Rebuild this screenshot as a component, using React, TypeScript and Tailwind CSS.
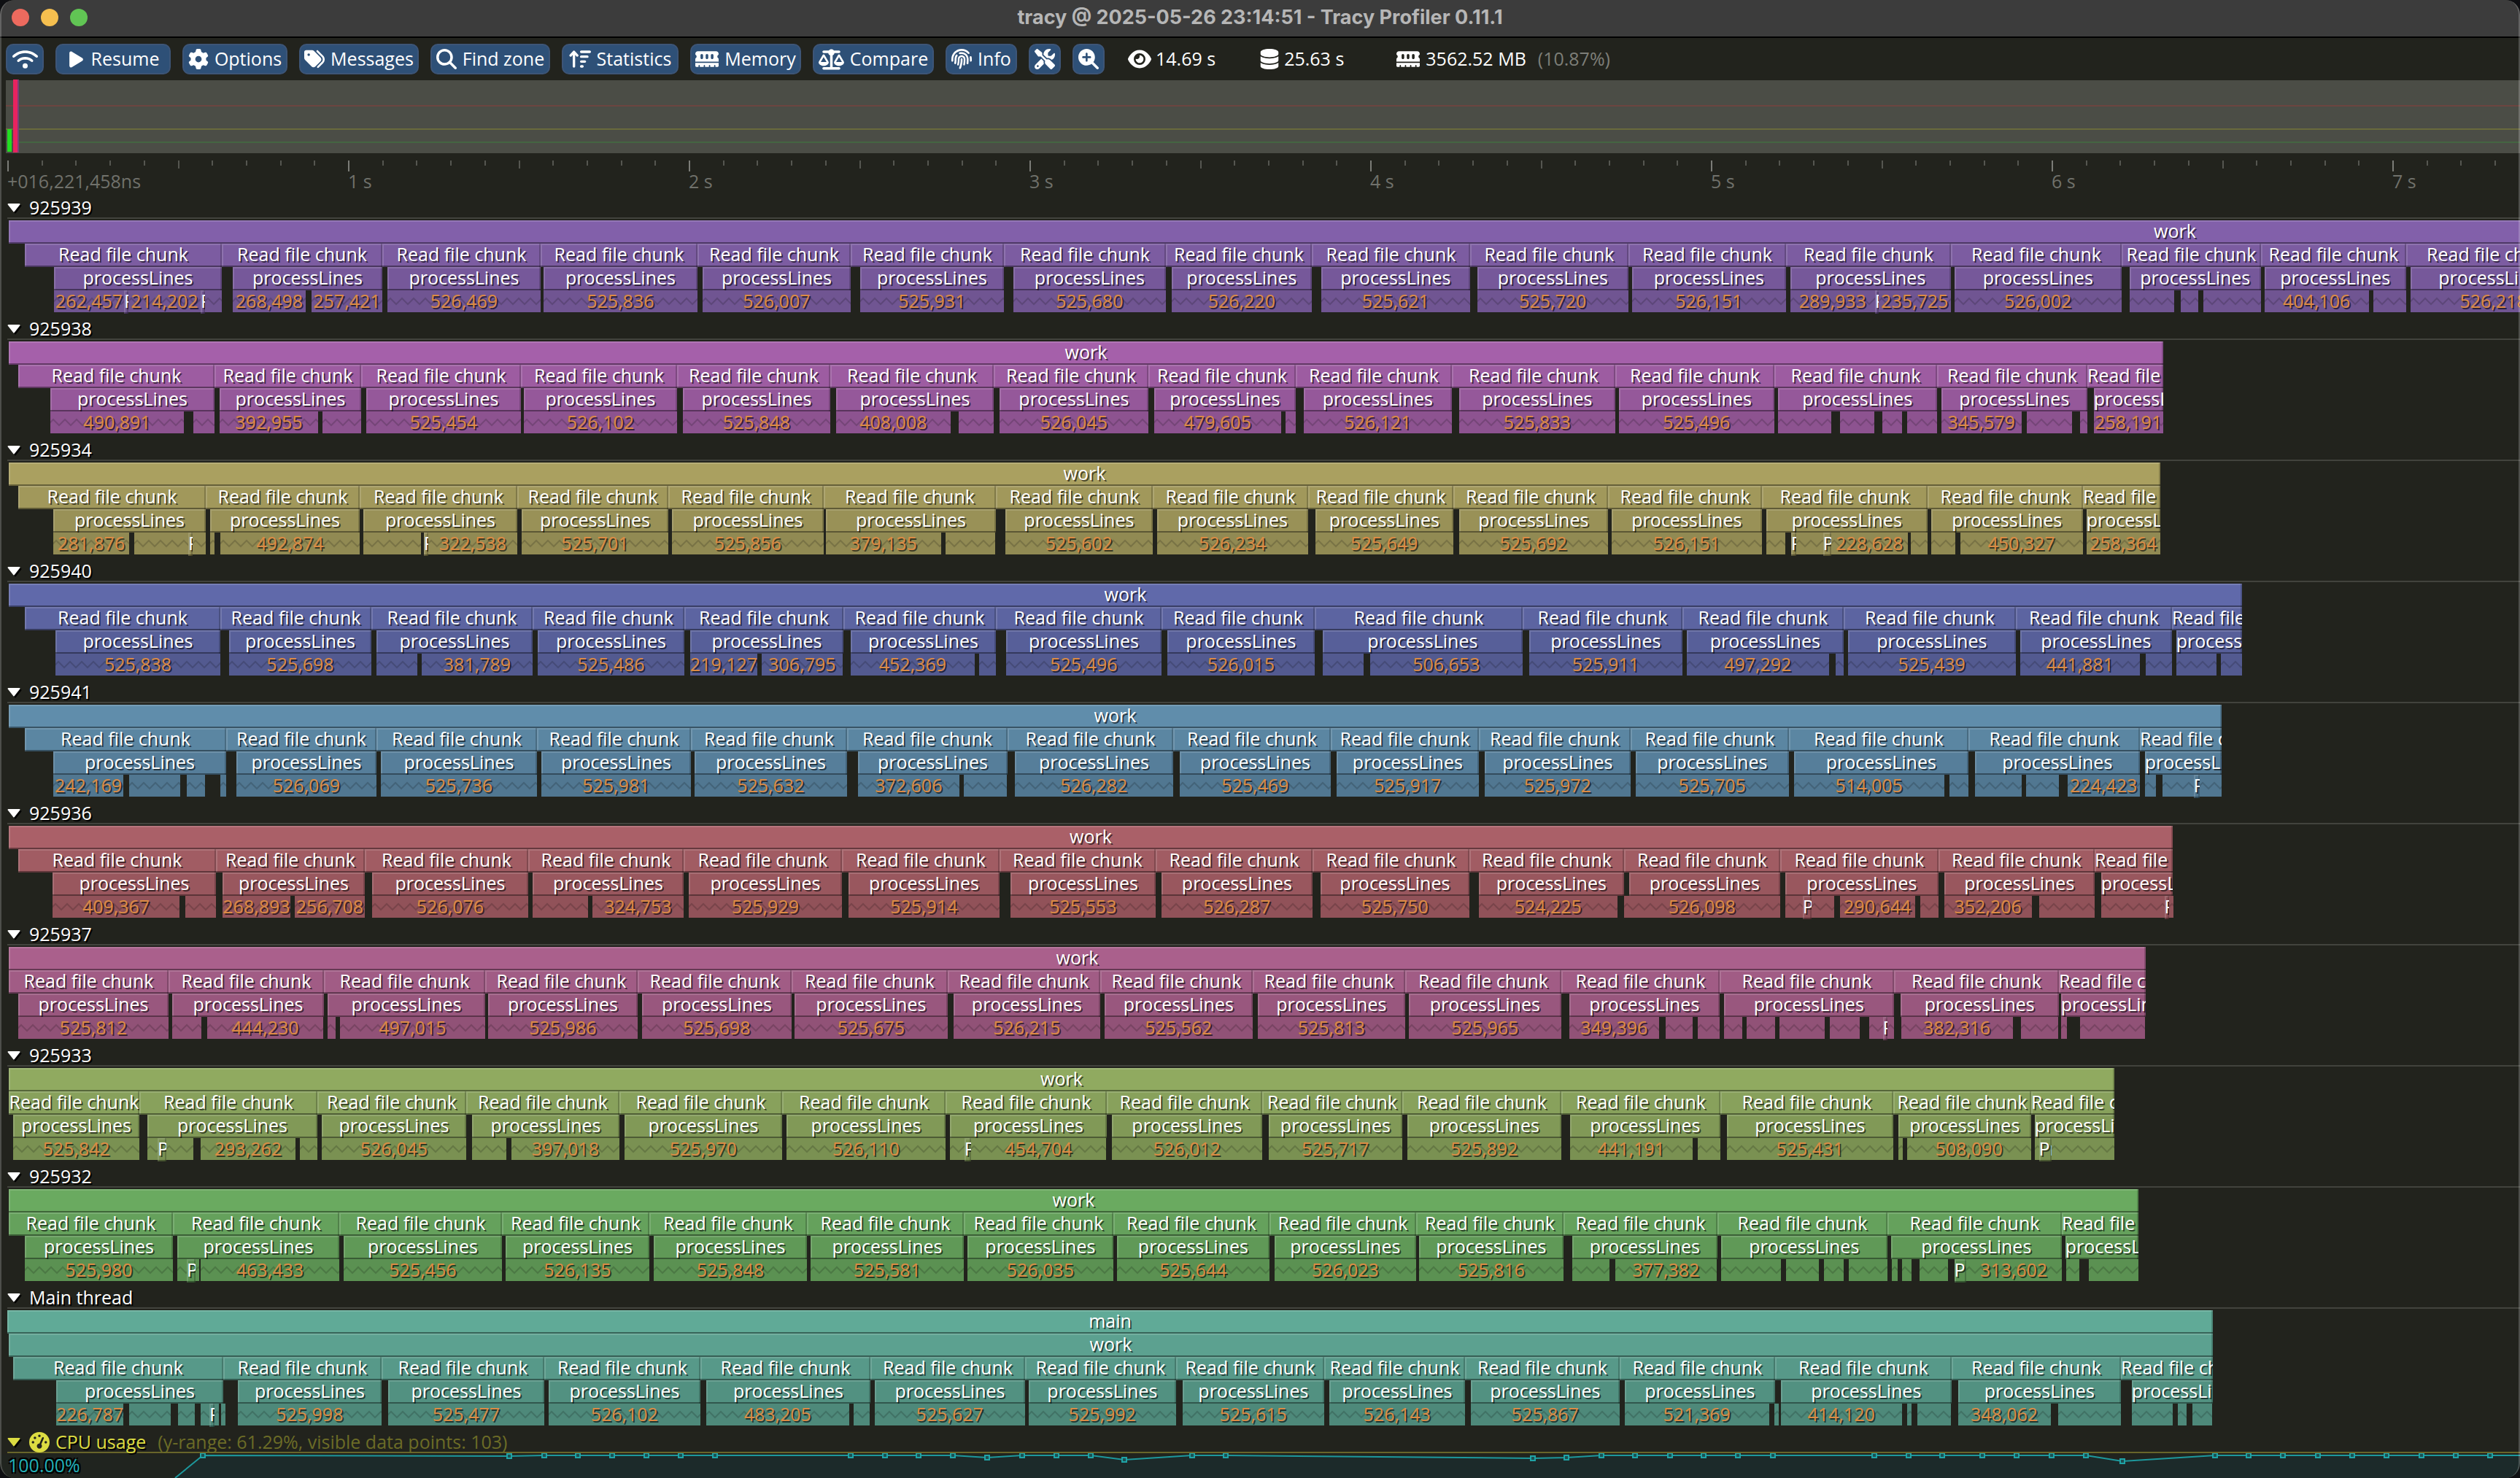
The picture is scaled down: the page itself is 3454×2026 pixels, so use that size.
import type { ReactNode } from "react";
import {
  FaArrowUpWideShort,
  FaDatabase,
  FaEye,
  FaFingerprint,
  FaGaugeHigh,
  FaGear,
  FaMagnifyingGlass,
  FaMagnifyingGlassPlus,
  FaMemory,
  FaPlay,
  FaScaleBalanced,
  FaScrewdriverWrench,
  FaTags,
  FaWifi,
} from "react-icons/fa6";

/** Width of the visible time range, in timeline units. */
const VIEW = 3454;
const SECOND = 467;
const pct = (units: number) => `${(units / VIEW) * 100}%`;

/** [start, end, label]; label "P" marks a tiny processLines zone. */
type Leaf = [number, number, string?];
/** [read start, processLines start, merged child zones]. */
type Chunk = [number, number, string | Leaf[]];

type Thread = {
  name: string;
  end: number;
  colors: string[];
  chunks: Chunk[];
  roots: [string, number][];
};

const threads: Thread[] = [
  {
    name: "925939",
    end: 5950,
    roots: [["work", 12]],
    colors: ["bg-[#8260aa]", "bg-[#7c5ca1]", "bg-[#76589a]", "bg-[#705592]"],
    chunks: [
      [34, 74, [[74, 170, "262,457"], [170, 176, "P"], [176, 275, "214,202"], [275, 281, "P"], [281, 304]]],
      [304, 319, [[319, 419, "268,498"], [427, 524, "257,421"]]],
      [524, 531, "526,469"],
      [741, 745, "525,836"],
      [956, 963, "526,007"],
      [1166, 1179, "525,931"],
      [1376, 1389, "525,680"],
      [1598, 1606, "526,220"],
      [1798, 1811, "525,621"],
      [2015, 2025, "525,720"],
      [2232, 2237, "526,151"],
      [2448, 2454, [[2454, 2570, "289,933"], [2570, 2575, "P"], [2575, 2674, "235,725"]]],
      [2674, 2679, "526,002"],
      [2908, 2919, [[2919, 2980], [2989, 3013], [3020, 3099]]],
      [3099, 3104, [[3104, 3247, "404,106"], [3253, 3298]]],
      [3298, 3304, "526,218"],
      [3532, 3540, "525,702"],
    ],
  },
  {
    name: "925938",
    end: 2965,
    roots: [["work", 12]],
    colors: ["bg-[#a560aa]", "bg-[#9d5ca1]", "bg-[#95589a]", "bg-[#8d5390]"],
    chunks: [
      [25, 69, [[69, 252, "490,891"], [265, 294]]],
      [294, 301, [[301, 436, "392,955"], [442, 495]]],
      [495, 502, "525,454"],
      [714, 718, "526,102"],
      [928, 936, "525,848"],
      [1138, 1146, [[1146, 1303, "408,008"], [1314, 1362]]],
      [1362, 1370, "526,045"],
      [1574, 1582, [[1582, 1756, "479,605"], [1762, 1776]]],
      [1776, 1787, "526,121"],
      [1990, 2000, "525,833"],
      [2214, 2219, "525,496"],
      [2432, 2437, [[2437, 2510], [2522, 2569], [2580, 2607], [2614, 2655]]],
      [2655, 2661, [[2661, 2771, "345,579"], [2778, 2840], [2851, 2861]]],
      [2861, 2870, "258,191"],
    ],
  },
  {
    name: "925934",
    end: 2961,
    roots: [["work", 12]],
    colors: ["bg-[#aaa060]", "bg-[#a1985b]", "bg-[#999157]", "bg-[#918a53]"],
    chunks: [
      [25, 73, [[73, 177, "281,876"], [184, 258], [258, 264, "P"], [264, 282]]],
      [282, 288, [[288, 294], [302, 493, "492,874"]]],
      [493, 498, [[498, 577], [581, 587, "P"], [587, 709, "322,538"]]],
      [709, 715, "525,701"],
      [916, 921, "525,856"],
      [1129, 1132, [[1132, 1290, "379,135"], [1296, 1364]]],
      [1365, 1378, "525,602"],
      [1580, 1586, "526,234"],
      [1793, 1803, "525,649"],
      [1992, 2000, "525,692"],
      [2204, 2209, "526,151"],
      [2415, 2421, [[2421, 2447], [2455, 2462, "P"], [2462, 2499], [2499, 2510, "P"], [2510, 2615, "228,628"], [2619, 2642]]],
      [2642, 2647, [[2647, 2680], [2687, 2855, "450,327"]]],
      [2855, 2860, "258,364"],
    ],
  },
  {
    name: "925940",
    end: 3073,
    roots: [["work", 12]],
    colors: ["bg-[#6069aa]", "bg-[#5c64a1]", "bg-[#575f99]", "bg-[#535a90]"],
    chunks: [
      [34, 76, "525,838"],
      [302, 314, "525,698"],
      [509, 516, [[516, 572], [578, 730, "381,789"]]],
      [730, 737, "525,486"],
      [938, 946, [[946, 1038, "219,127"], [1044, 1155, "306,795"]]],
      [1156, 1166, [[1166, 1336, "452,369"], [1342, 1365]]],
      [1365, 1379, "525,496"],
      [1592, 1600, "526,015"],
      [1802, 1813, [[1813, 1869], [1878, 2087, "506,653"]]],
      [2087, 2096, "525,911"],
      [2306, 2312, [[2312, 2507, "497,292"], [2516, 2527]]],
      [2527, 2533, "525,439"],
      [2763, 2769, [[2769, 2933, "441,881"], [2941, 2977]]],
      [2977, 2983, [[2983, 3038], [3044, 3073]]],
    ],
  },
  {
    name: "925941",
    end: 3045,
    roots: [["work", 12]],
    colors: ["bg-[#608dab]", "bg-[#5b86a2]", "bg-[#567e9a]", "bg-[#517791]"],
    chunks: [
      [34, 73, [[73, 169, "242,169"], [177, 247], [256, 281], [302, 310]]],
      [310, 324, "526,069"],
      [516, 522, "525,736"],
      [736, 742, "525,981"],
      [947, 952, "525,632"],
      [1161, 1176, [[1176, 1315, "372,606"], [1321, 1380]]],
      [1381, 1391, "526,282"],
      [1608, 1617, "525,469"],
      [1824, 1832, "525,917"],
      [2027, 2035, "525,972"],
      [2235, 2242, "525,705"],
      [2452, 2459, [[2459, 2665, "514,005"], [2672, 2698]]],
      [2698, 2707, [[2707, 2771], [2777, 2822], [2834, 2933, "224,423"]]],
      [2933, 2940, [[2940, 2955], [2964, 3007], [3007, 3015, "P"], [3015, 3045]]],
    ],
  },
  {
    name: "925936",
    end: 2978,
    roots: [["work", 12]],
    colors: ["bg-[#aa6068]", "bg-[#a15c63]", "bg-[#99575e]", "bg-[#915259]"],
    chunks: [
      [25, 72, [[72, 246, "409,367"], [254, 296]]],
      [296, 305, [[305, 398, "268,893"], [404, 500, "256,708"]]],
      [500, 510, "526,076"],
      [724, 730, [[730, 806], [812, 937, "324,753"]]],
      [937, 944, "525,929"],
      [1154, 1163, "525,914"],
      [1370, 1385, "525,553"],
      [1584, 1592, "526,287"],
      [1799, 1810, "525,750"],
      [2014, 2027, [[2027, 2217, "524,225"]]],
      [2226, 2233, [[2226, 2440, "526,098"]]],
      [2440, 2447, [[2447, 2471], [2471, 2483, "P"], [2483, 2514], [2522, 2625, "290,644"], [2632, 2657]]],
      [2657, 2665, [[2665, 2785, "352,206"], [2795, 2871]]],
      [2871, 2880, [[2880, 2967], [2967, 2973, "P"], [2973, 2979]]],
    ],
  },
  {
    name: "925937",
    end: 2941,
    roots: [["work", 12]],
    colors: ["bg-[#aa608c]", "bg-[#a15c85]", "bg-[#99577e]", "bg-[#915277]"],
    chunks: [
      [12, 25, "525,812"],
      [231, 236, [[236, 276], [284, 443, "444,230"]]],
      [444, 449, [[449, 460], [466, 665, "497,015"]]],
      [665, 669, "525,986"],
      [874, 880, "525,698"],
      [1085, 1089, "525,675"],
      [1299, 1307, "526,215"],
      [1508, 1514, "525,562"],
      [1717, 1724, "525,813"],
      [1926, 1931, "525,965"],
      [2140, 2151, [[2151, 2274, "349,396"], [2283, 2320], [2327, 2357]]],
      [2357, 2363, [[2363, 2388], [2394, 2433], [2439, 2501], [2508, 2549], [2562, 2581], [2581, 2587, "P"], [2587, 2596]]],
      [2596, 2605, [[2606, 2759, "382,316"], [2771, 2822]]],
      [2822, 2825, [[2826, 2834], [2852, 2941]]],
    ],
  },
  {
    name: "925933",
    end: 2898,
    roots: [["work", 12]],
    colors: ["bg-[#90aa60]", "bg-[#88a15c]", "bg-[#819957]", "bg-[#7a9152]"],
    chunks: [
      [12, 18, "525,842"],
      [191, 202, [[202, 216], [216, 228, "P"], [228, 265], [275, 405, "293,262"], [411, 435]]],
      [435, 441, "526,045"],
      [639, 647, [[647, 694], [701, 849, "397,018"]]],
      [849, 856, "525,970"],
      [1072, 1078, "526,110"],
      [1296, 1302, [[1302, 1322], [1322, 1331, "P"], [1331, 1516, "454,704"]]],
      [1517, 1524, "526,012"],
      [1730, 1739, "525,717"],
      [1922, 1929, "525,892"],
      [2140, 2152, [[2152, 2320, "441,191"], [2327, 2358]]],
      [2358, 2367, "525,431"],
      [2595, 2602, [[2602, 2608], [2614, 2784, "508,090"]]],
      [2784, 2789, [[2789, 2795], [2795, 2812, "P"], [2812, 2898]]],
    ],
  },
  {
    name: "925932",
    end: 2931,
    roots: [["work", 12]],
    colors: ["bg-[#6aaa60]", "bg-[#65a15c]", "bg-[#609957]", "bg-[#5b9152]"],
    chunks: [
      [12, 34, "525,980"],
      [237, 243, [[243, 256], [256, 268, "P"], [268, 273], [275, 465, "463,433"]]],
      [465, 471, "525,456"],
      [688, 693, "526,135"],
      [890, 896, "525,848"],
      [1106, 1111, "525,581"],
      [1321, 1326, "526,035"],
      [1526, 1531, "525,644"],
      [1740, 1747, "526,023"],
      [1941, 1945, "525,816"],
      [2143, 2155, [[2155, 2206], [2214, 2353, "377,382"]]],
      [2354, 2359, [[2359, 2441], [2448, 2493], [2500, 2527], [2534, 2587]]],
      [2587, 2592, [[2593, 2601], [2607, 2620], [2631, 2670], [2679, 2695, "P"], [2695, 2826, "313,602"]]],
      [2826, 2831, [[2832, 2850], [2863, 2931]]],
    ],
  },
  {
    name: "Main thread",
    end: 3033,
    roots: [["main", 10], ["work", 12]],
    colors: ["bg-[#60aa97]", "bg-[#5ca190]", "bg-[#579989]", "bg-[#529181]", "bg-[#4e897a]"],
    chunks: [
      [18, 77, [[77, 169, "226,787"], [177, 234], [244, 267], [275, 287], [287, 294, "P"], [294, 300], [303, 309]]],
      [306, 326, "525,998"],
      [523, 532, "525,477"],
      [746, 752, "526,102"],
      [960, 968, [[968, 1164, "483,205"], [1170, 1192]]],
      [1193, 1199, "525,627"],
      [1405, 1410, "525,992"],
      [1612, 1621, "525,615"],
      [1815, 1822, "526,143"],
      [2008, 2016, "525,867"],
      [2220, 2227, [[2227, 2425, "521,369"], [2432, 2438]]],
      [2433, 2441, [[2441, 2607, "414,120"], [2614, 2620], [2628, 2674]]],
      [2675, 2684, [[2684, 2811, "348,062"], [2821, 2907]]],
      [2907, 2922, [[2922, 2978], [2985, 2998], [3006, 3033]]],
    ],
  },
];

/** CPU usage samples: [time, depth below 100%]. */
const samples: [number, number][] = [
  [278, 0], [698, 1], [746, 0], [792, 0], [839, 0], [886, 0], [933, 0], [980, 0],
  [1166, 0], [1213, 0], [1259, 0], [1306, 0], [1353, 3], [1401, 0], [1448, 0], [1495, 0], [1541, 6],
  [1634, 0], [1680, 0], [2101, 4], [2147, 3], [2195, 0], [2241, 0], [2289, 0], [2335, 0], [2382, 0],
  [2430, 0], [2569, 0], [2616, 0], [2662, 0], [2717, 0], [2764, 0], [2812, 0], [2859, 0], [2909, 8],
  [3036, 0], [3082, 0], [3129, 0], [3177, 0], [3224, 0], [3271, 0], [3319, 0], [3366, 0], [3413, 0],
];

const bevel =
  "shadow-[inset_0_-2px_0_rgba(0,0,0,0.4),inset_-2px_0_0_rgba(0,0,0,0.2),inset_2px_2px_0_rgba(255,255,255,0.14)]";
const textShadow = "[text-shadow:2px_2px_0_rgba(0,0,0,0.6)]";

type Span = { start: number; end: number; label?: string; leaf?: boolean };

/** One depth level of a thread: zones laid out left to right with their gaps. */
function Row({ spans, color }: { spans: Span[]; color: string }) {
  return (
    <div className="flex h-8">
      {spans.map(({ start, end, label, leaf }, i) => {
        const before = i === 0 ? 0 : spans[i - 1].end;
        const style = { marginLeft: pct(start - before), width: pct(end - start) };
        if (leaf && label !== "P") {
          return (
            <div
              key={start}
              style={style}
              className={`relative flex h-[30px] shrink-0 justify-center overflow-x-clip whitespace-nowrap ${color}`}
            >
              <svg className="absolute inset-0 h-full w-full" aria-hidden="true">
                <rect width="100%" height="100%" fill="url(#zigzag)" />
              </svg>
              <span className={`relative leading-7 text-[#dc8b44] ${textShadow}`}>{label}</span>
            </div>
          );
        }
        return (
          <div
            key={start}
            style={style}
            className={`flex h-8 shrink-0 overflow-x-clip leading-7 whitespace-nowrap text-white [justify-content:safe_center] ${color} ${bevel} ${textShadow}`}
          >
            {label === "P" ? "Pr" : label}
          </div>
        );
      })}
    </div>
  );
}

function Header({ children, tone, line }: { children: ReactNode; tone: string; line: string }) {
  return (
    <div className={`mb-0.5 ml-2.5 border-b-2 pt-2 ${line}`}>
      <button type="button" className={`flex h-[26px] items-center ${tone} [text-shadow:2px_2px_0_#000]`}>
        <svg viewBox="0 0 18 12" className="mr-3 h-3 w-[18px] drop-shadow-[2px_2px_0_#000]" aria-hidden="true">
          <path d="M1.5 1h15L9 10.5z" fill="currentColor" stroke="currentColor" strokeWidth="2" strokeLinejoin="round" />
        </svg>
        {children}
      </button>
    </div>
  );
}

function ThreadView({ thread }: { thread: Thread }) {
  const { name, end, chunks, roots, colors } = thread;
  const chunkEnd = (i: number) => (i + 1 < chunks.length ? chunks[i + 1][0] : end);
  const visible = chunks.filter(([start]) => start < VIEW);
  const reads = visible.map(([start], i) => ({ start, end: chunkEnd(i), label: "Read file chunk" }));
  const procs = visible.map(([, start], i) => ({ start, end: chunkEnd(i), label: "processLines" }));
  const leaves = visible.flatMap(([, start, kids], i): Span[] =>
    typeof kids === "string"
      ? [{ start, end: chunkEnd(i), label: kids, leaf: true }]
      : kids.map(([s, e, label]) => ({ start: s, end: e, label, leaf: true })),
  );
  return (
    <section className="shrink-0">
      <Header tone="text-white" line="border-[#42433d]">{name}</Header>
      {roots.map(([label, start], i) => (
        <Row key={label} spans={[{ start, end, label }]} color={colors[i]} />
      ))}
      <Row spans={reads} color={colors[roots.length]} />
      <Row spans={procs} color={colors[roots.length + 1]} />
      <Row spans={leaves} color={colors[roots.length + 2]} />
    </section>
  );
}

function ToolButton({ icon, label, name, width }: { icon: ReactNode; label?: string; name?: string; width: string }) {
  return (
    <button
      type="button"
      aria-label={name}
      className={`flex h-[42px] shrink-0 items-center justify-center gap-2 rounded-[10px] border-2 border-[#3d5577] bg-[#2e5077] whitespace-nowrap text-white ${width}`}
    >
      {icon}
      {label}
    </button>
  );
}

const tools = [
  { icon: <FaWifi size={35} />, name: "Connection", width: "w-[52px]" },
  { icon: <FaPlay size={25} />, label: "Resume", width: "w-[158px]" },
  { icon: <FaGear size={28} />, label: "Options", width: "w-[144px]" },
  { icon: <FaTags size={28} />, label: "Messages", width: "w-[164px]" },
  { icon: <FaMagnifyingGlass size={28} />, label: "Find zone", width: "w-[164px]" },
  { icon: <FaArrowUpWideShort size={30} />, label: "Statistics", width: "w-[160px]" },
  { icon: <FaMemory size={32} />, label: "Memory", width: "w-[152px]" },
  { icon: <FaScaleBalanced size={35} />, label: "Compare", width: "w-[166px]" },
  { icon: <FaFingerprint size={28} />, label: "Info", width: "w-[98px]" },
  { icon: <FaScrewdriverWrench size={28} />, name: "Tools", width: "w-[44px]" },
  { icon: <FaMagnifyingGlassPlus size={28} />, name: "Zoom", width: "w-[44px]" },
];

function Ruler() {
  return (
    <div className="flex h-[54px] shrink-0 overflow-x-clip pt-2.5 text-[#70716b]">
      <div className="shrink-0" style={{ width: pct(10) }} />
      {Array.from({ length: 8 }, (_, s) => (
        <div key={s} className="shrink-0" style={{ width: pct(SECOND) }}>
          <div className="flex h-4">
            {Array.from({ length: 10 }, (_, t) => (
              <div key={t} className="flex-1">
                <div
                  className={
                    t === 0 ? "h-[15px] w-0.5 bg-[#7b7c77]" : t === 5 ? "h-[11px] w-0.5 bg-[#555650]" : "h-[7px] w-0.5 bg-[#555650]"
                  }
                />
              </div>
            ))}
          </div>
          <div className="leading-6 whitespace-nowrap">{s === 0 ? "+016,221,458ns" : `${s} s`}</div>
        </div>
      ))}
    </div>
  );
}

function FrameStrip() {
  return (
    <div className="relative mt-2 ml-2 h-[100px] shrink-0 bg-[#4b4d46]">
      <div className="absolute inset-x-0 top-[34px] h-0.5 bg-[#6c4540]" />
      <div className="absolute inset-x-0 top-[66px] h-0.5 bg-[#696a3c]" />
      <div className="absolute inset-x-0 top-[84px] h-0.5 bg-[#446542]" />
      <div className="absolute bottom-0.5 left-0.5 h-[31px] w-1.5 bg-[#22dd22]" />
      <div className="absolute -top-px bottom-px left-2.5 w-2 border-r-2 border-[#7b3f78] bg-[#e8235f]" />
    </div>
  );
}

function CpuPlot() {
  const line = [[240, 31] as [number, number], ...samples, [VIEW, 0] as [number, number]]
    .map(([x, y]) => `${x},${y + 3}`)
    .join(" ");
  return (
    <div className="relative min-h-8 flex-1 bg-[#20241f]">
      <svg viewBox={`0 0 ${VIEW} 34`} preserveAspectRatio="xMinYMin meet" className="absolute inset-x-0 -top-0.5 w-full" aria-hidden="true">
        <polygon points={`240,34 ${line} ${VIEW},34`} fill="#1c2a2a" />
        <polyline points={line} fill="none" stroke="#1d989c" strokeWidth="2" />
        {samples.map(([x, y]) => (
          <rect key={x} x={x - 3} y={y} width="6" height="6" fill="#1c4f52" stroke="#1fa3a6" strokeWidth="2" />
        ))}
      </svg>
      <div className="relative pl-[11px] leading-7 text-[#22b0b8] [text-shadow:2px_2px_0_#000,-2px_-2px_0_#000,2px_-2px_0_#000,-2px_2px_0_#000]">
        100.00%
      </div>
    </div>
  );
}

export default function App() {
  return (
    <div className="h-screen bg-[#0e0f12]">
      <div className="relative flex h-full flex-col overflow-hidden rounded-[20px] bg-[#22231d] font-['Open_Sans',sans-serif] text-[25px]">
        <svg className="absolute h-0 w-0" aria-hidden="true">
          <defs>
            <pattern id="zigzag" width="16" height="30" patternUnits="userSpaceOnUse">
              <path d="M-1 14L0 15L4 11L12 19L17 14" fill="none" stroke="#000" strokeOpacity="0.17" strokeWidth="2" />
            </pattern>
          </defs>
        </svg>

        <header className="relative flex h-[52px] shrink-0 items-center justify-center border-b-2 border-black bg-[#3c3c3c] pb-0.5">
          <div className="absolute left-4 flex gap-4">
            <button type="button" aria-label="Close" className="h-6 w-6 rounded-full bg-[#ed6a5e]" />
            <button type="button" aria-label="Minimize" className="h-6 w-6 rounded-full bg-[#f5bf4f]" />
            <button type="button" aria-label="Zoom window" className="h-6 w-6 rounded-full bg-[#61c554]" />
          </div>
          <h1 className="font-['Inter',sans-serif] text-[27px] leading-8 font-bold text-[#b6b6b6]">
            tracy @ 2025-05-26 23:14:51 - Tracy Profiler 0.11.1
          </h1>
        </header>

        <nav className="mt-2 flex h-[42px] shrink-0 items-center gap-4 pl-2">
          {tools.map((tool) => (
            <ToolButton key={tool.label ?? tool.name} {...tool} />
          ))}
          <div className="ml-4 flex items-center gap-1.5 text-white">
            <FaEye size={32} />
            14.69 s
          </div>
          <div className="ml-11 flex items-center gap-1.5 text-white">
            <FaDatabase size={28} />
            25.63 s
          </div>
          <div className="ml-14 flex items-center gap-2 text-white">
            <FaMemory size={32} />
            3562.52 MB
            <span className="ml-2 text-[#7d7e78]">(10.87%)</span>
          </div>
        </nav>

        <FrameStrip />
        <Ruler />

        {threads.map((thread) => (
          <ThreadView key={thread.name} thread={thread} />
        ))}

        <Header tone="text-[#dcdc42]" line="border-[#68652a]">
          <FaGaugeHigh size={28} className="mr-2" />
          CPU usage
          <span className="ml-4 text-[#6c6c27] [text-shadow:none]">(y-range: 61.29%, visible data points: 103)</span>
        </Header>
        <CpuPlot />

        <div className="pointer-events-none absolute inset-0 rounded-[20px] border-x-2 border-white/20" />
      </div>
    </div>
  );
}
